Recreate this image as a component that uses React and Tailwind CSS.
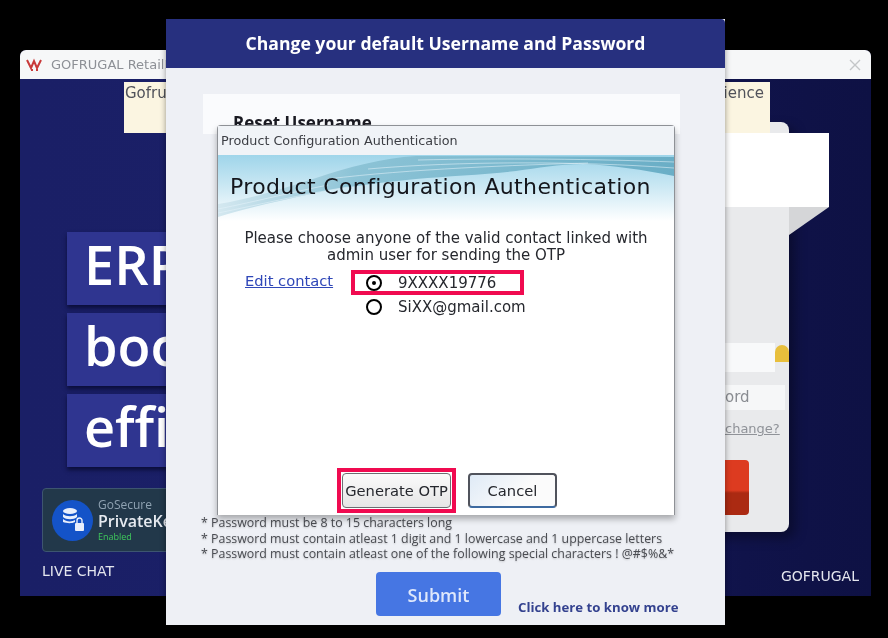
const windowFont = { fontFamily: '"DejaVu Sans", sans-serif' }
const openSans = { fontFamily: '"Open Sans", sans-serif' }

function Banner() {
  return (
    <svg className="absolute inset-0 w-full h-full" viewBox="0 0 456 66" preserveAspectRatio="none">
      <defs>
        <linearGradient id="sky" x1="0" y1="0" x2="0" y2="1">
          <stop offset="0" stopColor="#9fd5ea" />
          <stop offset="0.5" stopColor="#cde9f4" />
          <stop offset="1" stopColor="#ffffff" />
        </linearGradient>
        <linearGradient id="wave" x1="0" y1="0" x2="1" y2="0">
          <stop offset="0" stopColor="#d4e8f0" />
          <stop offset="0.3" stopColor="#8cc3d6" />
          <stop offset="1" stopColor="#6aaec6" />
        </linearGradient>
      </defs>
      <rect width="456" height="66" fill="url(#sky)" />
      <path d="M0 49 C40 42 70 32 98 23 C130 12 165 3 198 1 L456 2 L456 21 C425 15 395 10 365 9 C340 9 320 13 298 16 C265 20 230 21 198 24 C160 28 125 32 98 38 C60 46 25 54 0 62Z" fill="url(#wave)" />
      <path d="M200 5 C280 3 380 4 456 7 M150 14 C240 6 360 6 456 13 M110 24 C190 14 300 10 370 8 M0 54 C40 46 70 38 110 30 M0 58 C40 50 80 40 130 32" stroke="#e4f3f9" strokeWidth="0.8" fill="none" opacity="0.7" />
    </svg>
  )
}

function PromoLine({ children }) {
  return (
    <div className="w-[200px] h-[73px] bg-[#2f3590] pl-[17px] pt-[5px] shadow-[0_3px_4px_#0b0e3a]">{children}</div>
  )
}

function BackWindow() {
  return (
    <div className="absolute left-[20px] top-[50px] w-[851px] h-[546px] rounded-t-md overflow-hidden flex flex-col bg-[#10134a]">
      <div className="h-[29px] shrink-0 bg-[#f6f7f8] flex items-center justify-between pl-[6px] pr-[10px]">
        <div className="flex items-center gap-[9px]">
          <svg width="16" height="14" viewBox="0 0 16 14">
            <path d="M1 2 L5 10 L8 3 L11 10 L15 2" stroke="#c93a3a" strokeWidth="2" fill="none" />
            <rect x="5" y="11" width="2" height="2" fill="#c93a3a" />
            <rect x="10" y="11" width="2" height="2" fill="#c93a3a" />
          </svg>
          <span className="text-[13px] text-[#8d9096]" style={windowFont}>GOFRUGAL RetailEasy</span>
        </div>
        <svg width="12" height="12" viewBox="0 0 12 12" stroke="#c4c6c8" strokeWidth="1.4">
          <path d="M1 1 L11 11 M11 1 L1 11" />
        </svg>
      </div>
      <div className="flex-1 flex flex-col pt-[153px] pl-[22px] pr-[12px] bg-[linear-gradient(90deg,#1a1f66_0%,#1b2068_50%,#10134a_85%,#0e1144_100%)]">
        <div className="ml-[25px] flex flex-col gap-[8px] text-white text-[54px] leading-none font-semibold" style={openSans}>
          <PromoLine>ERP</PromoLine>
          <PromoLine>boost</PromoLine>
          <PromoLine>effi</PromoLine>
        </div>
        <div className="mt-[21px] w-[200px] h-[64px] border border-[#3d5570] bg-[#22384a] flex items-center pl-[9px] gap-[5px] rounded-sm" style={openSans}>
          <div className="w-[41px] h-[41px] rounded-full bg-[#1453c8] flex items-center justify-center">
            <svg width="24" height="26" viewBox="0 0 24 26" fill="#e8eefc">
              <ellipse cx="9" cy="4" rx="7" ry="3" />
              <path d="M2 7 C5 10 13 10 16 7 V10 C13 13 5 13 2 10Z" />
              <path d="M2 12 C5 15 11 15 14 13 V15 C10 17 5 16 2 15Z" />
              <rect x="14" y="16" width="9" height="8" rx="1" />
              <path d="M16 16 V13.5 A2.5 2.5 0 0 1 21 13.5 V16" fill="none" stroke="#e8eefc" strokeWidth="1.4" />
            </svg>
          </div>
          <div className="flex flex-col text-[#e6eaf0]">
            <span className="text-[12px] leading-[14px] text-[#8fa2b2]">GoSecure</span>
            <span className="text-[16px] leading-[19px] font-semibold">PrivateKey</span>
            <span className="text-[9px] leading-[12px] text-[#3fc95c]">Enabled</span>
          </div>
        </div>
        <div className="flex items-start justify-between text-[14px] text-[#e4e6ee]" style={windowFont}>
          <span className="mt-[9px]">LIVE CHAT</span>
          <span className="mt-[14px]">GOFRUGAL</span>
        </div>
      </div>
    </div>
  )
}

function LoginPanel() {
  return (
    <div className="absolute left-[600px] top-[122px] w-[189px] h-[410px] rounded-lg bg-[#e9eaec] shadow-[6px_6px_12px_rgba(0,0,0,0.35)] flex flex-col pl-[125px] pt-[221px]" style={windowFont}>
      <div className="flex items-start h-[29px]">
        <div className="w-[50px] h-full bg-[#f8f9fa]" />
        <div className="w-[14px] h-[17px] mt-[2px] rounded-t-full bg-[#e8bf3c]" />
      </div>
      <div className="mt-[13px] w-[60px] h-[25px] bg-[#f6f7f8] text-[15px] leading-[25px] text-[#8a8d92] overflow-hidden">ord</div>
      <div className="mt-[10px] text-[13px] leading-[18px] text-[#8f9298] underline whitespace-nowrap">change?</div>
      <div className="mt-[22px] w-[24px] h-[55px] rounded-r-sm bg-[linear-gradient(180deg,#dd3b20_0%,#dd3b20_55%,#ab2a12_60%,#ab2a12_100%)]" />
    </div>
  )
}

function MainDialog() {
  return (
    <div className="absolute left-[166px] top-[19px] w-[559px] h-[606px] bg-[#eef0f5] flex flex-col shadow-[0_0_6px_rgba(0,0,0,0.4)]" style={openSans}>
      <div className="h-[49px] shrink-0 bg-[#27307f] rounded-tr-sm flex items-center justify-center text-white text-[17.6px] font-bold">
        Change your default Username and Password
      </div>
      <div className="flex-1 flex flex-col pt-[26px] pl-[35px]">
        <div className="ml-[2px] w-[477px] h-[40px] bg-[#fafbfd] pl-[30px] pt-[20px] text-[17px] font-bold text-[#1a1a22] leading-none overflow-hidden">
          Reset Username
        </div>
        <div className="mt-[381px] text-[12.4px] leading-[15.5px] text-[#4a4c52] [text-shadow:0_1px_2px_rgba(0,0,0,0.2)]">
          <p>* Password must be 8 to 15 characters long</p>
          <p>* Password must contain atleast 1 digit and 1 lowercase and 1 uppercase letters</p>
          <p>* Password must contain atleast one of the following special characters ! @#$%&amp;*</p>
        </div>
        <div className="mt-[10px] ml-[175px] flex items-end gap-[17px]">
          <button className="w-[125px] h-[44px] rounded-sm bg-[#4676e3] text-[#dfe8fb] text-[18px] font-semibold pt-[3px]">
            Submit
          </button>
          <a className="text-[13.2px] leading-[18px] font-bold text-[#34428f]">Click here to know more</a>
        </div>
      </div>
    </div>
  )
}

function Radio({ checked }) {
  return (
    <span className="w-[16px] h-[16px] rounded-full border-2 border-black bg-white flex items-center justify-center shrink-0">
      {checked && <span className="w-[4px] h-[4px] rounded-full bg-black" />}
    </span>
  )
}

function AuthDialog() {
  return (
    <div className="absolute left-[217px] top-[125px] w-[458px] h-[390px] rounded-t-sm border-x border-t border-[#8e9196] bg-white flex flex-col shadow-[0_4px_6px_rgba(0,0,0,0.3)] text-[14.7px] text-[#26282e]" style={windowFont}>
      <div className="h-[29px] shrink-0 bg-[#f0f3f7] flex items-center pl-[3px] text-[12.75px] text-[#3c3e44]">
        Product Configuration Authentication
      </div>
      <div className="relative h-[66px] shrink-0">
        <Banner />
        <div className="relative pl-[12px] pt-[18px] text-[22px] leading-[28px] tracking-[0.35px] text-[#14161c]">
          Product Configuration Authentication
        </div>
      </div>
      <p className="pt-[9px] text-center text-[15px] leading-[17px]">
        Please choose anyone of the valid contact linked with<br />admin user for sending the OTP
      </p>
      <div className="mt-[6px] flex items-start">
        <div className="w-[133px] pl-[27px]">
          <a className="leading-[17px] text-[#2f47b8] underline whitespace-nowrap">Edit contact</a>
        </div>
        <div className="flex flex-col gap-[3px] text-[15px]">
          <div className="w-[173px] h-[25px] border-[4px] border-[#f00a50] flex items-center pl-[11px] gap-[16px]">
            <Radio checked />
            <span className="pt-[1px]">9XXXX19776</span>
          </div>
          <div className="flex items-center pl-[15px] gap-[16px] h-[18px]">
            <Radio />
            SiXX@gmail.com
          </div>
        </div>
      </div>
      <div className="mt-auto pb-[2px] pl-[119px] flex items-center gap-[12px]">
        <div className="w-[119px] h-[45px] border-[4px] border-[#f00a50] p-[1px]">
          <button className="w-full h-full pt-[1px] border border-[#6c6e72] rounded-sm bg-[linear-gradient(180deg,#fafafa,#e6e6e6)] whitespace-nowrap">
            Generate OTP
          </button>
        </div>
        <button className="w-[89px] h-[35px] pt-[1px] border-2 border-[#50535c] border-b-[#3d6aa0] rounded-sm bg-[linear-gradient(135deg,#dfeaf6,#fbfbfb_60%)]">
          Cancel
        </button>
      </div>
    </div>
  )
}

export default function App() {
  return (
    <div className="relative w-[888px] h-[638px] bg-black overflow-hidden blur-[0.4px]">
      <BackWindow />
      <LoginPanel />
      {/* pieces of the login window that stick out behind the dialog */}
      <div className="absolute left-[124px] top-[82px] w-[646px] h-[51px] bg-[#fbf5e1] px-[1px] flex justify-between text-[15px] text-[#50525a]" style={windowFont}>
        <span>Gofrugal</span>
        <span className="mr-[5px]">ience</span>
      </div>
      <div className="absolute left-[725px] top-[133px] w-[104px] h-[74px] bg-white" />
      <svg className="absolute left-[789px] top-[207px]" width="40" height="28" viewBox="0 0 40 28">
        <path d="M0 0 H40 L0 28Z" fill="#d5d6d8" />
      </svg>
      <MainDialog />
      <AuthDialog />
    </div>
  )
}
